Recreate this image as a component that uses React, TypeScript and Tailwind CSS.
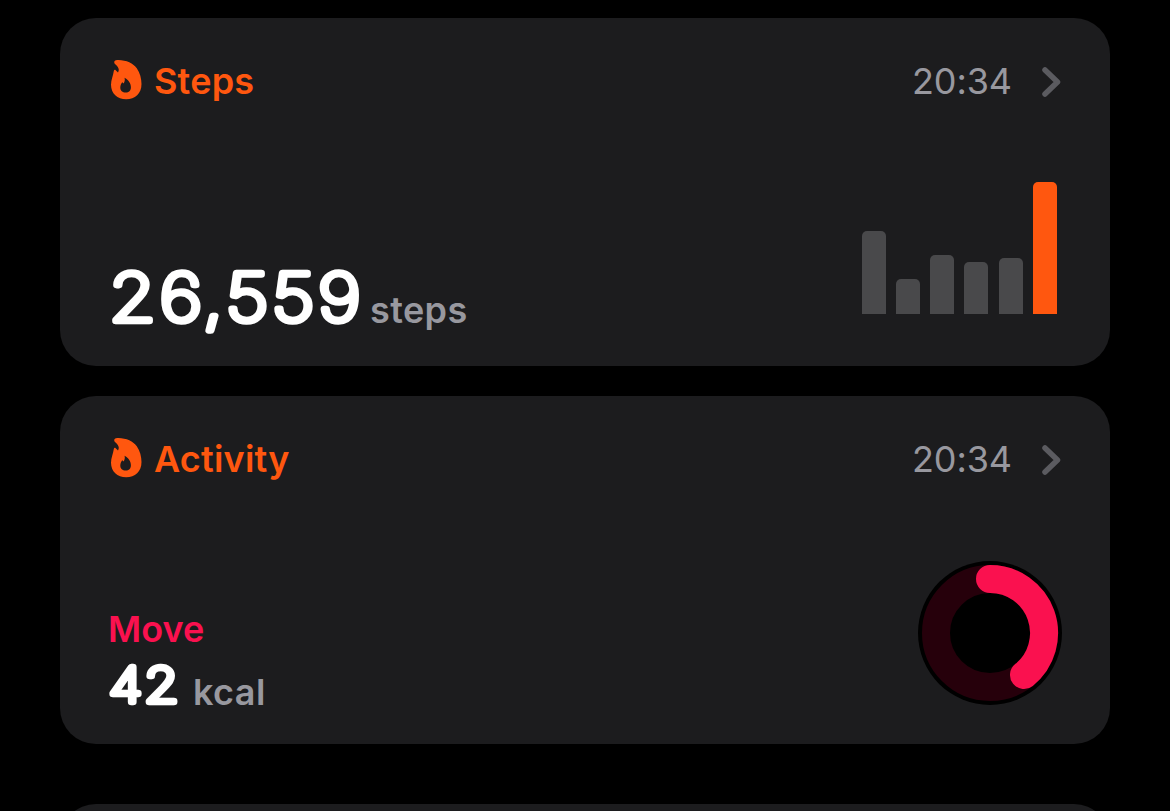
import type { ReactNode } from "react"

const bars = [83, 35, 59, 52, 56, 132]

function Flame() {
  return (
    <svg viewBox="0 0 32 40" className="h-10 w-8 shrink-0" fill="#ff570f" fillRule="evenodd">
      <path d="M6 0.200C15 -0.600 23 3.200 26.800 8.200C30 12.800 31.500 18.500 31.500 24C31.500 33.500 25 39.300 16.200 39.300C7.300 39.300 1 33.500 1 24.800C1 19.500 3.300 15.500 3.800 10.900C4 9.700 5 9.500 5.700 10.300L8 12.400C9.700 9.700 8.600 6.800 5 3.900C3.600 2.500 4.200 0.500 6 0.200ZM14.500 17.800C15.200 20 14.600 21.900 13.500 23.500C13 22.800 12.700 22.500 12.200 22.200C11 23.900 10.300 25.700 10.300 27.500C10.300 30.700 12.500 32.600 15.700 32.600C18.900 32.600 20.900 30.600 20.900 27.300C20.900 23.200 18.300 19.700 14.500 17.800Z" />
    </svg>
  )
}

function Chevron() {
  return (
    <svg viewBox="0 0 20 32" className="h-8 w-5" fill="none" stroke="#5b5b60" strokeWidth="5.5" strokeLinecap="round" strokeLinejoin="round">
      <path d="M3 4L15.500 16L3 28" />
    </svg>
  )
}

function Card({ title, children }: { title: string; children: ReactNode }) {
  return (
    <section className="flex h-[348px] flex-col justify-between rounded-[36px] bg-[#1c1c1e] pl-[50px] pr-12">
      <header className="mt-[41px] flex h-11 items-start justify-between">
        <div className="flex items-start gap-3">
          <div className="pt-px">
            <Flame />
          </div>
          <h2 className="text-[36px] font-semibold leading-[44px] tracking-[0.2px] text-[#ff570f]">{title}</h2>
        </div>
        <div className="flex items-start gap-[30px]">
          <time className="text-[36px] leading-[44px] tracking-[-0.1px] text-[#98989f]">20:34</time>
          <div className="pt-[7px]">
            <Chevron />
          </div>
        </div>
      </header>
      {children}
    </section>
  )
}

/* Thin digits with a round-joined stroke, so the ends come out rounded */
function Steps() {
  return (
    <svg className="shrink-0 overflow-visible tracking-[3px] [font-optical-sizing:none]" width="260" height="92" fill="white" stroke="white" strokeWidth="6.6" strokeLinejoin="round">
      <text x="-1" y="69.500" fontSize="66" fontWeight="100" textLength="255" lengthAdjust="spacingAndGlyphs">
        26,559
      </text>
    </svg>
  )
}

function Calories() {
  return (
    <svg className="shrink-0 overflow-visible tracking-[2px] [font-optical-sizing:none]" width="83" height="66" fill="white" stroke="white" strokeWidth="6.4" strokeLinejoin="round">
      <text x="-1" y="53" fontSize="48" fontWeight="100" textLength="72" lengthAdjust="spacingAndGlyphs">
        42
      </text>
    </svg>
  )
}

function Ring() {
  return (
    <svg viewBox="0 0 144 144" className="size-36" fill="none" strokeWidth="28">
      <circle cx="72" cy="72" r="72" fill="black" stroke="none" />
      <circle cx="72" cy="72" r="54" stroke="#26000b" />
      <path d="M72 18A54 54 0 0 1 106 114" stroke="#fa114f" strokeLinecap="round" />
    </svg>
  )
}

export default function App() {
  return (
    <main className="h-[811px] overflow-hidden bg-black px-[60px] pt-[18px] font-['Inter',sans-serif]">
      <Card title="Steps">
        <div className="flex items-end justify-between">
          <div className="mb-[23px] flex items-end">
            <Steps />
            <span className="mb-[11px] text-[36px] font-semibold leading-[44px] tracking-[0.4px] text-[#98989f]">steps</span>
          </div>
          {/* Daily totals, today last */}
          <div className="mb-[52px] mr-[5px] flex h-[132px] items-end gap-[10.3px]">
            {bars.map((height, i) => (
              <div
                key={i}
                className={`w-6 rounded-t-[5px] ${i === bars.length - 1 ? "bg-[#ff570f]" : "bg-[#49494b]"}`}
                style={{ height }}
              />
            ))}
          </div>
        </div>
      </Card>

      <div className="mt-[30px]">
        <Card title="Activity">
          <div className="flex items-end justify-between">
            <div className="mb-[29px]">
              <h3 className="mb-[-2px] ml-[-2px] text-[36px] font-semibold leading-[44px] text-[#fa114f]">Move</h3>
              <div className="flex items-end">
                <Calories />
                <span className="mb-px text-[36px] font-semibold leading-[44px] tracking-[0.4px] text-[#98989f]">kcal</span>
              </div>
            </div>
            <div className="mb-[39px]">
              <Ring />
            </div>
          </div>
        </Card>
      </div>

      <div className="mt-[60px] h-[348px] rounded-[36px] bg-[#1c1c1e]" />
    </main>
  )
}
